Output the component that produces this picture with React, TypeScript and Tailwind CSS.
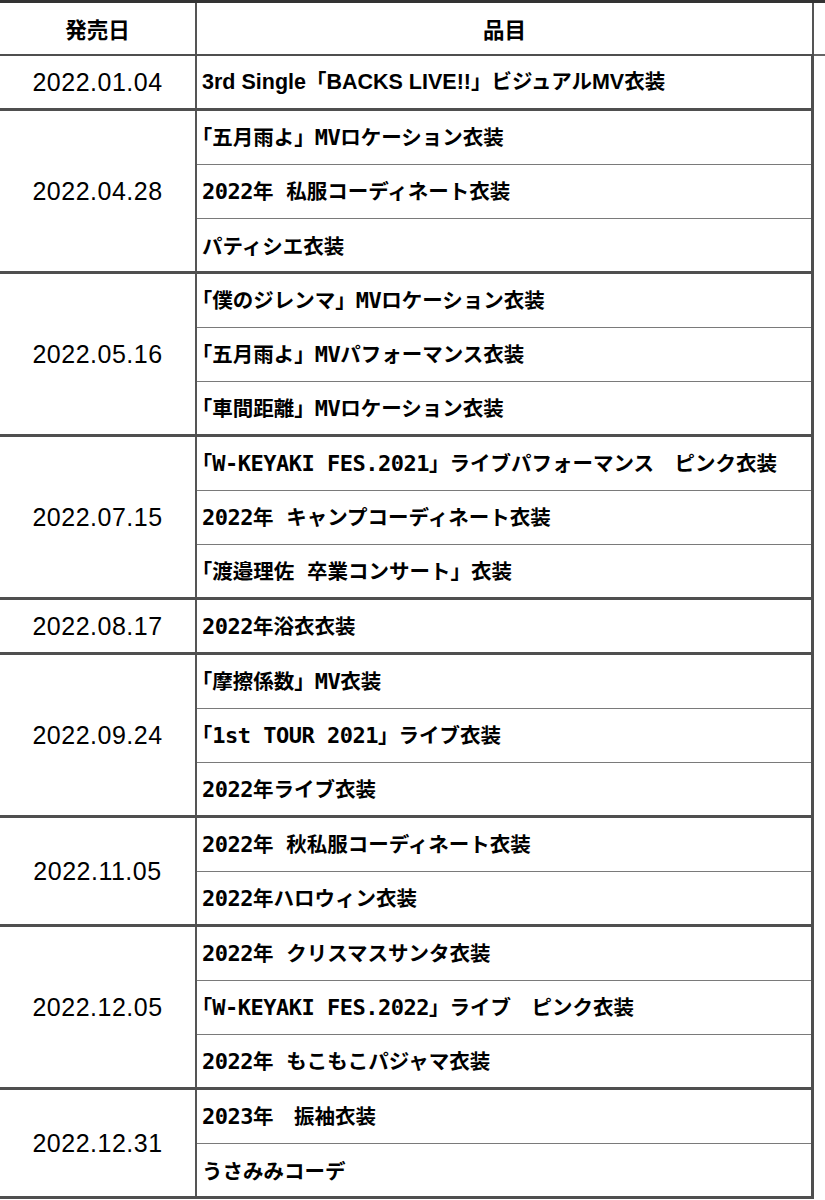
import * as React from 'react';

type Group = {
  date: string;
  items: string[];
  // first row of the sheet uses proportional latin glyphs
  proportional?: boolean;
};

const groups: Group[] = [
  { date: '2022.01.04', items: ['3rd Single「BACKS LIVE!!」ビジュアルMV衣装'], proportional: true },
  {
    date: '2022.04.28',
    items: ['「五月雨よ」MVロケーション衣装', '2022年 私服コーディネート衣装', 'パティシエ衣装'],
  },
  {
    date: '2022.05.16',
    items: ['「僕のジレンマ」MVロケーション衣装', '「五月雨よ」MVパフォーマンス衣装', '「車間距離」MVロケーション衣装'],
  },
  {
    date: '2022.07.15',
    items: [
      '「W-KEYAKI FES.2021」ライブパフォーマンス　ピンク衣装',
      '2022年 キャンプコーディネート衣装',
      '「渡邉理佐 卒業コンサート」衣装',
    ],
  },
  { date: '2022.08.17', items: ['2022年浴衣衣装'] },
  {
    date: '2022.09.24',
    items: ['「摩擦係数」MV衣装', '「1st TOUR 2021」ライブ衣装', '2022年ライブ衣装'],
  },
  { date: '2022.11.05', items: ['2022年 秋私服コーディネート衣装', '2022年ハロウィン衣装'] },
  {
    date: '2022.12.05',
    items: ['2022年 クリスマスサンタ衣装', '「W-KEYAKI FES.2022」ライブ　ピンク衣装', '2022年 もこもこパジャマ衣装'],
  },
  { date: '2022.12.31', items: ['2023年　振袖衣装', 'うさみみコーデ'] },
];

// latin runs get a slightly bigger size so they sit as tall as the kana
function ItemText({ text, proportional }: { text: string; proportional?: boolean }) {
  const parts = text.split(/([\x20-\x7E]+)/).filter(Boolean);
  return (
    <>
      {parts.map((part, i) => {
        if (/^[\x20-\x7E]+$/.test(part)) {
          return (
            <span
              key={i}
              className={
                proportional
                  ? "font-['Liberation_Sans',sans-serif] text-[21.5px]"
                  : "font-['DejaVu_Sans_Mono',monospace] text-[22px] tracking-[-0.5px]"
              }
            >
              {part}
            </span>
          );
        }
        if (i === 0 && part.startsWith('「')) {
          return (
            <React.Fragment key={i}>
              <span className="[font-feature-settings:'halt']">「</span>
              {part.slice(1)}
            </React.Fragment>
          );
        }
        return <React.Fragment key={i}>{part}</React.Fragment>;
      })}
    </>
  );
}

function GroupRow({ group }: { group: Group }) {
  const last = group.items.length - 1;
  return (
    <div className="flex border-b-[3px] border-[#4f4f4f]">
      <div className="w-[197px] shrink-0 border-r-2 border-[#555] flex items-center justify-center">
        <span className="font-['Liberation_Sans',sans-serif] text-[25px] tracking-[0.5px] leading-none text-black">
          {group.date}
        </span>
      </div>
      <div className="flex-1 border-r-[3px] border-[#4f4f4f] flex flex-col">
        {group.items.map((item, i) => (
          <div
            key={item}
            className={
              i < last
                ? 'h-[54px] border-b border-[#7a7a7a] flex items-center pl-[5px]'
                : 'h-[52px] flex items-center pl-[5px]'
            }
          >
            <span className="font-['Noto_Sans_CJK_JP',sans-serif] font-bold text-[20.5px] leading-none text-black whitespace-nowrap">
              <ItemText text={item} proportional={group.proportional} />
            </span>
          </div>
        ))}
      </div>
    </div>
  );
}

export default function App() {
  return (
    <div className="w-[825px] min-h-[1200px] bg-white">
      <div className="flex border-t-[3px] border-[#333]">
        <div className="w-[814px] shrink-0 flex flex-col">
          {/* header */}
          <div className="flex h-[53px] border-b-2 border-[#4f4f4f]">
            <div className="w-[197px] shrink-0 border-r-2 border-[#555] flex items-center justify-center">
              <span className="font-['Noto_Sans_CJK_JP',sans-serif] font-bold text-[21.5px] leading-none text-black">
                発売日
              </span>
            </div>
            <div className="flex-1 border-r-2 border-[#555] flex items-center justify-center">
              <span className="font-['Noto_Sans_CJK_JP',sans-serif] font-bold text-[21.5px] leading-none text-black">
                品目
              </span>
            </div>
          </div>

          {groups.map((g) => (
            <GroupRow key={g.date} group={g} />
          ))}
        </div>

        {/* next column, cut off at the edge */}
        <div className="flex-1">
          <div className="h-[53px] border-b-2 border-[#666]" />
        </div>
      </div>
    </div>
  );
}
